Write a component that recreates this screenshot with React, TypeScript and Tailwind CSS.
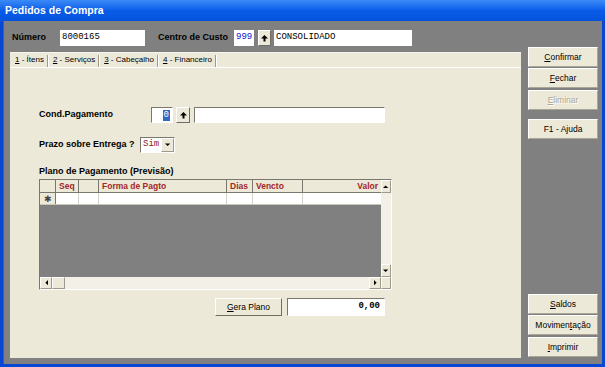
import type { ReactNode } from "react";

const sans = "font-['Liberation_Sans',Arial,sans-serif]";
const mono = "font-['Liberation_Mono','Courier_New',monospace]";

const UpIcon = () => (
  <svg width="7" height="7" viewBox="0 0 7 7">
    <path d="M3.5 0 L7 3.5 H0 Z" fill="#000" />
    <rect x="2.5" y="3" width="2" height="3.5" fill="#000" />
  </svg>
);

const Tri = ({ dir }: { dir: "up" | "down" | "left" | "right" }) => {
  const d = {
    up: "M0 4 L3.5 0.5 L7 4 Z",
    down: "M0 0.5 L7 0.5 L3.5 4 Z",
    left: "M4 0 L4 7 L0.5 3.5 Z",
    right: "M0 0 L3.5 3.5 L0 7 Z",
  }[dir];
  const w = dir === "up" || dir === "down" ? 7 : 4;
  const h = dir === "up" || dir === "down" ? 4.5 : 7;
  return (
    <svg width={w * 0.75} height={h * 0.75} viewBox={`0 0 ${w} ${h}`}>
      <path d={d} fill="#000" />
    </svg>
  );
};

const U = ({ children }: { children: ReactNode }) => <span className="underline">{children}</span>;

const SideBtn = ({ children, disabled }: { children: ReactNode; disabled?: boolean }) => (
  <div
    className={`h-[20px] w-[70px] flex items-center justify-center bg-[#ece9d8] border border-t-white border-l-white border-b-[#a9a698] border-r-[#a9a698] text-[8.5px] ${
      disabled ? "text-[#aca899]" : "text-black"
    }`}
  >
    {children}
  </div>
);

const ScrollBtn = ({ dir, className = "" }: { dir: "up" | "down" | "left" | "right"; className?: string }) => (
  <div
    className={`flex items-center justify-center bg-[#ece9d8] border border-t-white border-l-white border-b-[#9d9a8c] border-r-[#9d9a8c] ${className}`}
  >
    <Tri dir={dir} />
  </div>
);

const Tab = ({ n, label }: { n: string; label: string }) => (
  <div className="flex items-end h-full">
    <span className="text-[8px] leading-[12px] pb-[1px] text-black whitespace-nowrap">
      <U>{n}</U> - {label}
    </span>
    <div className="ml-[3px] mr-[4px] h-[12px] w-[2px] border-l border-l-[#9d9a8c] border-r border-r-white" />
  </div>
);

const cols = [
  { w: "w-[23px]", label: "Seq", align: "text-left" },
  { w: "w-[20px]", label: "", align: "text-left" },
  { w: "w-[128px]", label: "Forma de Pagto", align: "text-left" },
  { w: "w-[26px]", label: "Dias", align: "text-left" },
  { w: "w-[50px]", label: "Vencto", align: "text-left" },
  { w: "w-[78px]", label: "Valor", align: "text-right" },
];

export default function App() {
  return (
    <div className={`w-[605px] h-[367px] flex flex-col bg-[#0847d4] overflow-hidden ${sans}`}>
      {/* barra de título */}
      <div className="h-[21px] shrink-0 flex items-center pl-[5px] bg-gradient-to-b from-[#3a8af7] via-[#0a5ce8] to-[#0452dc] text-white font-bold text-[10.5px]">
        Pedidos de Compra
      </div>

      <div className="flex-1 ml-[3px] mr-[3px] mb-[3px] bg-[#808080] flex border-l border-l-[#5a5a5a]">
        {/* coluna esquerda */}
        <div className="ml-[6px] w-[511px] flex flex-col">
          <div className="h-[31px] pt-[9px] flex items-start">
            <div className="w-[50px] pl-[2px] pt-[1px] font-bold text-[9px] leading-[12px] text-black">Número</div>
            <div className={`w-[85px] h-[16px] bg-white flex items-center pl-[2px] text-[9px] ${mono} text-black`}>8000165</div>
            <div className="ml-[13px] w-[76px] pt-[1px] font-bold text-[9px] leading-[12px] text-black">Centro de Custo</div>
            <div className={`w-[20px] h-[16px] bg-white flex items-center pl-[2px] text-[9px] ${mono} text-[#1010d0]`}>999</div>
            <div className="ml-[4px] w-[13px] h-[16px] flex items-center justify-center bg-[#ece9d8] border border-t-white border-l-white border-b-[#6f6d63] border-r-[#6f6d63]">
              <UpIcon />
            </div>
            <div className={`ml-[3px] w-[138px] h-[16px] bg-white flex items-center pl-[2px] text-[9px] ${mono} text-black`}>CONSOLIDADO</div>
          </div>

          {/* painel com abas */}
          <div className="h-[306px] bg-[#ece9d8] flex flex-col border-t border-t-[#f6f5ee]">
            <div className="h-[15px] flex items-end pl-[5px] border-b border-b-white">
              <Tab n="1" label="Ítens" />
              <Tab n="2" label="Serviços" />
              <Tab n="3" label="Cabeçalho" />
              <Tab n="4" label="Financeiro" />
            </div>

            <div className="pl-[29px] pt-[39px] flex flex-col">
              {/* Cond. Pagamento */}
              <div className="flex items-start h-[16px]">
                <div className="w-[112px] font-bold text-[9px] leading-[10px] text-black mt-[2px]">Cond.Pagamento</div>
                <div className="w-[22px] h-[16px] bg-white border border-t-[#7a786e] border-l-[#7a786e] border-b-white border-r-white flex items-center justify-end pr-[2px]">
                  <span className={`bg-[#316ac5] text-white text-[9px] leading-[11px] px-[1px] ${mono}`}>0</span>
                </div>
                <div className="ml-[3px] w-[14px] h-[16px] flex items-center justify-center bg-[#ece9d8] border border-t-white border-l-white border-b-[#6f6d63] border-r-[#6f6d63]">
                  <UpIcon />
                </div>
                <div className="ml-[4px] w-[191px] h-[16px] bg-white border border-t-[#7a786e] border-l-[#7a786e] border-b-white border-r-white" />
              </div>

              {/* Prazo sobre entrega */}
              <div className="mt-[14px] flex items-start h-[16px]">
                <div className="w-[101px] font-bold text-[9px] leading-[10px] text-black mt-[2px]">Prazo sobre Entrega ?</div>
                <div className="w-[35px] h-[16px] bg-white border border-t-[#7a786e] border-l-[#7a786e] border-b-white border-r-white flex items-center">
                  <span className={`pl-[2px] flex-1 text-[9px] ${mono} text-[#8b1c1c]`}>Sim</span>
                  <ScrollBtn dir="down" className="w-[13px] h-[14px]" />
                </div>
              </div>

              {/* Plano de pagamento */}
              <div className="mt-[13px] h-[11px] font-bold text-[9px] leading-[11px] text-black">Plano de Pagamento (Previsão)</div>
              <div className="mt-[2px] w-[353px] h-[111px] border border-t-[#7a786e] border-l-[#7a786e] border-b-white border-r-white flex flex-col">
                <div className="flex h-[97px]">
                  <div className="w-[341px] flex flex-col">
                    <div className="h-[13px] flex bg-[#ece9d8] border-b border-b-[#7a786e]">
                      <div className="w-[16px] border-r border-r-[#7a786e]" />
                      {cols.map((c, i) => (
                        <div
                          key={i}
                          className={`${c.w} ${c.align} ${i < cols.length - 1 ? "border-r border-r-[#7a786e]" : ""} px-[3px] font-bold text-[8.5px] leading-[12px] text-[#a3262a] whitespace-nowrap overflow-hidden`}
                        >
                          {c.label}
                        </div>
                      ))}
                    </div>
                    <div className="h-[12px] flex bg-white border-b border-b-[#c8c6bb]">
                      <div className="w-[16px] bg-[#ece9d8] border-r border-r-[#7a786e] flex items-center justify-center text-[9px] leading-[10px] text-[#444]">
                        ✱
                      </div>
                      {cols.map((c, i) => (
                        <div key={i} className={`${c.w} ${i < cols.length - 1 ? "border-r border-r-[#d4d2c8]" : ""}`} />
                      ))}
                    </div>
                    <div className="flex-1 bg-[#808080]" />
                  </div>
                  <div className="w-[10px] flex flex-col bg-[#f3f1e7]">
                    <ScrollBtn dir="up" className="h-[13px]" />
                    <div className="flex-1" />
                    <ScrollBtn dir="down" className="h-[13px]" />
                  </div>
                </div>
                <div className="h-[12px] flex bg-[#f3f1e7]">
                  <ScrollBtn dir="left" className="w-[12px]" />
                  <div className="w-[13px] bg-[#ece9d8] border border-t-white border-l-white border-b-[#9d9a8c] border-r-[#9d9a8c]" />
                  <div className="flex-1" />
                  <ScrollBtn dir="right" className="w-[12px]" />
                  <div className="w-[10px] bg-[#ece9d8] border border-t-white border-l-white border-b-[#9d9a8c] border-r-[#9d9a8c]" />
                </div>
              </div>

              {/* Gera plano */}
              <div className="mt-[8px] flex items-center h-[18px]">
                <div className="ml-[176px] w-[67px] h-[18px] flex items-center justify-center bg-[#ece9d8] border border-t-white border-l-white border-b-[#716f64] border-r-[#716f64] text-[8.5px] text-black">
                  <span>
                    <U>G</U>era Plano
                  </span>
                </div>
                <div className={`ml-[5px] w-[98px] h-[18px] bg-white border border-t-[#7a786e] border-l-[#7a786e] border-b-white border-r-white flex items-center justify-end pr-[4px] font-bold text-[9px] ${mono} text-black`}>
                  0,00
                </div>
              </div>
            </div>
          </div>
        </div>

        {/* coluna direita: botões */}
        <div className="ml-[7px] pt-[26px] pb-[7px] flex flex-col">
          <div className="flex flex-col gap-[1px]">
            <SideBtn>
              <span><U>C</U>onfirmar</span>
            </SideBtn>
            <SideBtn>
              <span><U>F</U>echar</span>
            </SideBtn>
            <div className="mt-[1px]">
              <SideBtn disabled>
                <span className="[text-shadow:1px_1px_0_#fff]"><U>E</U>liminar</span>
              </SideBtn>
            </div>
          </div>
          <div className="mt-[9px]">
            <SideBtn>F1 - Ajuda</SideBtn>
          </div>
          <div className="flex-1" />
          <div className="flex flex-col gap-[1px]">
            <SideBtn>
              <span><U>S</U>aldos</span>
            </SideBtn>
            <SideBtn>
              <span>Movimen<U>t</U>ação</span>
            </SideBtn>
            <div className="mt-[1px]">
              <SideBtn>
                <span><U>I</U>mprimir</span>
              </SideBtn>
            </div>
          </div>
        </div>
      </div>
    </div>
  );
}
